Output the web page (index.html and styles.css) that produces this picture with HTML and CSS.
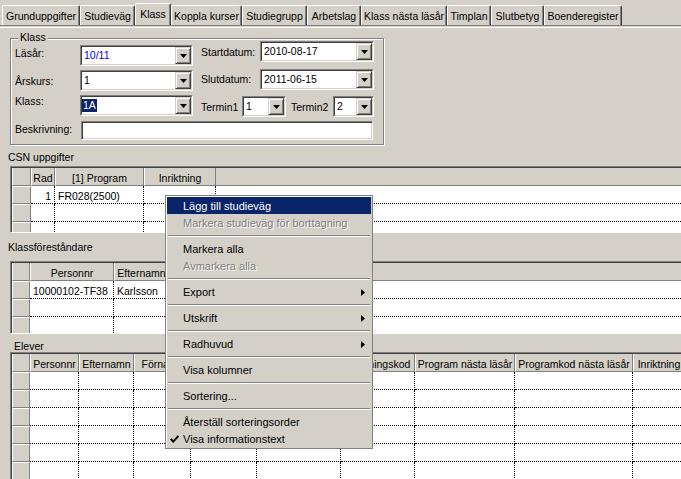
FILE: index.html
```html
<!DOCTYPE html>
<html lang="sv">
<head>
<meta charset="utf-8">
<title>Klass</title>
<link rel="stylesheet" href="styles.css">
</head>
<body>
<div class="app">
  <div class="tabs">
    <div class="tab tab-grund">Grunduppgifter</div>
    <div class="tab tab-studievag">Studieväg</div>
    <div class="tab tab-klass active">Klass</div>
    <div class="tab tab-koppla">Koppla kurser</div>
    <div class="tab tab-grupp">Studiegrupp</div>
    <div class="tab tab-arbetslag">Arbetslag</div>
    <div class="tab tab-nasta">Klass nästa läsår</div>
    <div class="tab tab-timplan">Timplan</div>
    <div class="tab tab-slutbetyg">Slutbetyg</div>
    <div class="tab tab-boende">Boenderegister</div>
  </div>

  <div class="panel">
    <div class="group">
      <div class="group-title">Klass</div>
      <div class="group-body">
        <div class="col-left">
          <div class="frow">
            <div class="lbl lbl-left pt2">Läsår:</div>
            <div class="combo w113"><div class="combo-in"><div class="combo-text blue">10/11</div><div class="combo-btn"><svg viewBox="0 0 7 4"><polygon points="0,0 7,0 3.5,4" fill="#000"/></svg></div></div></div>
          </div>
          <div class="frow">
            <div class="lbl lbl-left pt5">Årskurs:</div>
            <div class="combo w113"><div class="combo-in"><div class="combo-text">1</div><div class="combo-btn"><svg viewBox="0 0 7 4"><polygon points="0,0 7,0 3.5,4" fill="#000"/></svg></div></div></div>
          </div>
          <div class="frow">
            <div class="lbl lbl-left pt0">Klass:</div>
            <div class="combo w113"><div class="combo-in"><div class="combo-text sel-wrap"><span class="sel">1A</span></div><div class="combo-btn"><svg viewBox="0 0 7 4"><polygon points="0,0 7,0 3.5,4" fill="#000"/></svg></div></div></div>
          </div>
        </div>
        <div class="col-right">
          <div class="frow">
            <div class="lbl lbl-right pt5">Startdatum:</div>
            <div class="combo w114"><div class="combo-in"><div class="combo-text">2010-08-17</div><div class="combo-btn"><svg viewBox="0 0 7 4"><polygon points="0,0 7,0 3.5,4" fill="#000"/></svg></div></div></div>
          </div>
          <div class="frow row-slut">
            <div class="lbl lbl-right pt4">Slutdatum:</div>
            <div class="combo w114"><div class="combo-in"><div class="combo-text">2011-06-15</div><div class="combo-btn"><svg viewBox="0 0 7 4"><polygon points="0,0 7,0 3.5,4" fill="#000"/></svg></div></div></div>
          </div>
          <div class="frow row-termin">
            <div class="lbl lbl-t1 pt5">Termin1</div>
            <div class="combo w44"><div class="combo-in"><div class="combo-text">1</div><div class="combo-btn"><svg viewBox="0 0 7 4"><polygon points="0,0 7,0 3.5,4" fill="#000"/></svg></div></div></div>
            <div class="lbl lbl-t2 pt5">Termin2</div>
            <div class="combo w41"><div class="combo-in"><div class="combo-text">2</div><div class="combo-btn"><svg viewBox="0 0 7 4"><polygon points="0,0 7,0 3.5,4" fill="#000"/></svg></div></div></div>
          </div>
        </div>
      </div>
      <div class="desc">
        <div class="lbl lbl-desc">Beskrivning:</div>
        <div class="textbox"></div>
      </div>
    </div>

    <div class="section-label csn-label">CSN uppgifter</div>
    <div class="grid grid-csn">
      <div class="g-row">
        <div class="h"></div><div class="h">Rad</div><div class="h">[1] Program</div><div class="h">Inriktning</div><div class="h fill"></div>
      </div>
      <div class="g-row">
        <div class="c rh"></div><div class="c num">1</div><div class="c">FR028(2500)</div><div class="c"></div><div class="c fill"></div>
      </div>
      <div class="g-row">
        <div class="c rh"></div><div class="c"></div><div class="c"></div><div class="c"></div><div class="c fill"></div>
      </div>
      <div class="g-row">
        <div class="c rh"></div><div class="c"></div><div class="c"></div><div class="c"></div><div class="c fill"></div>
      </div>
    </div>

    <div class="section-label kf-label">Klassföreståndare</div>
    <div class="grid grid-kf">
      <div class="g-row">
        <div class="h"></div><div class="h">Personnr</div><div class="h">Efternamn</div><div class="h"></div><div class="h fill"></div>
      </div>
      <div class="g-row">
        <div class="c rh"></div><div class="c">10000102-TF38</div><div class="c">Karlsson</div><div class="c"></div><div class="c fill"></div>
      </div>
      <div class="g-row">
        <div class="c rh"></div><div class="c"></div><div class="c"></div><div class="c"></div><div class="c fill"></div>
      </div>
      <div class="g-row">
        <div class="c rh"></div><div class="c"></div><div class="c"></div><div class="c"></div><div class="c fill"></div>
      </div>
    </div>

    <div class="section-label elever-label">Elever</div>
    <div class="grid grid-elever">
      <div class="g-row">
        <div class="h"></div><div class="h">Personnr</div><div class="h">Efternamn</div><div class="h">Förnamn</div><div class="h"></div><div class="h"></div><div class="h">Inriktningskod</div><div class="h">Program nästa läsår</div><div class="h">Programkod nästa läsår</div><div class="h">Inriktning</div><div class="h fill"></div>
      </div>
      <div class="g-row"><div class="c rh"></div><div class="c"></div><div class="c"></div><div class="c"></div><div class="c"></div><div class="c"></div><div class="c"></div><div class="c"></div><div class="c"></div><div class="c"></div><div class="c fill"></div></div>
      <div class="g-row"><div class="c rh"></div><div class="c"></div><div class="c"></div><div class="c"></div><div class="c"></div><div class="c"></div><div class="c"></div><div class="c"></div><div class="c"></div><div class="c"></div><div class="c fill"></div></div>
      <div class="g-row"><div class="c rh"></div><div class="c"></div><div class="c"></div><div class="c"></div><div class="c"></div><div class="c"></div><div class="c"></div><div class="c"></div><div class="c"></div><div class="c"></div><div class="c fill"></div></div>
      <div class="g-row"><div class="c rh"></div><div class="c"></div><div class="c"></div><div class="c"></div><div class="c"></div><div class="c"></div><div class="c"></div><div class="c"></div><div class="c"></div><div class="c"></div><div class="c fill"></div></div>
      <div class="g-row"><div class="c rh"></div><div class="c"></div><div class="c"></div><div class="c"></div><div class="c"></div><div class="c"></div><div class="c"></div><div class="c"></div><div class="c"></div><div class="c"></div><div class="c fill"></div></div>
      <div class="g-row"><div class="c rh"></div><div class="c"></div><div class="c"></div><div class="c"></div><div class="c"></div><div class="c"></div><div class="c"></div><div class="c"></div><div class="c"></div><div class="c"></div><div class="c fill"></div></div>
      <div class="g-row"><div class="c rh"></div><div class="c"></div><div class="c"></div><div class="c"></div><div class="c"></div><div class="c"></div><div class="c"></div><div class="c"></div><div class="c"></div><div class="c"></div><div class="c fill"></div></div>
    </div>
  </div>

  <div class="menu">
    <div class="mi active">Lägg till studieväg</div>
    <div class="mi disabled">Markera studieväg för borttagning</div>
    <div class="sep"></div>
    <div class="mi">Markera alla</div>
    <div class="mi disabled">Avmarkera alla</div>
    <div class="sep"></div>
    <div class="mi">Export<svg class="arrow" viewBox="0 0 4 7"><polygon points="0,0 4,3.5 0,7" fill="#000"/></svg></div>
    <div class="sep"></div>
    <div class="mi">Utskrift<svg class="arrow" viewBox="0 0 4 7"><polygon points="0,0 4,3.5 0,7" fill="#000"/></svg></div>
    <div class="sep"></div>
    <div class="mi">Radhuvud<svg class="arrow" viewBox="0 0 4 7"><polygon points="0,0 4,3.5 0,7" fill="#000"/></svg></div>
    <div class="sep"></div>
    <div class="mi">Visa kolumner</div>
    <div class="sep"></div>
    <div class="mi">Sortering...</div>
    <div class="sep"></div>
    <div class="mi">Återställ sorteringsorder</div>
    <div class="mi checked"><svg class="check" viewBox="0 0 9 8"><polyline points="0.8,3.8 3.2,6.6 8.4,0.8" fill="none" stroke="#000" stroke-width="2"/></svg>Visa informationstext</div>
  </div>
</div>
</body>
</html>
```

FILE: styles.css
```css
* { box-sizing: border-box; }
html, body { margin: 0; padding: 0; }
body {
  background: #d4d0c8;
  font-family: "Liberation Sans", Arial, sans-serif;
  font-size: 10.5px;
  color: #000;
  width: 681px;
  height: 479px;
  overflow: hidden;
}
.app { position: relative; width: 681px; height: 479px; overflow: hidden; }

/* Tabs */
.tabs {
  display: flex;
  align-items: flex-end;
  height: 26px;
  padding-left: 2px;
  border-bottom: 1px solid #808080;
}
.tab {
  height: 20px;
  border: 1px solid;
  border-bottom: 0;
  border-color: #fff #404040 #fff #fff;
  border-radius: 2px 2px 0 0;
  box-shadow: inset -1px 0 0 #808080;
  padding-top: 1px;
  line-height: 18px;
  text-align: center;
  white-space: nowrap;
  overflow: hidden;
}
.tab.active { height: 22px; }
.tab-grund { width: 78px; }
.tab-studievag { width: 55px; }
.tab-klass { width: 36px; }
.tab-koppla { width: 71px; }
.tab-grupp { width: 65px; }
.tab-arbetslag { width: 54px; }
.tab-nasta { width: 86px; }
.tab-timplan { width: 44px; }
.tab-slutbetyg { width: 53px; }
.tab-boende { width: 78px; }

.panel { margin-top: 1px; border-top: 1px solid #fff; }

/* Group box */
.group {
  margin: 10px 0 0 10px;
  width: 374px;
  height: 107px;
  border: 1px solid #808080;
  box-shadow: inset 1px 1px 0 #fff, 1px 1px 0 #fff;
}
.group-title {
  width: max-content;
  margin: -8px 0 0 7px;
  padding: 0 2px;
  height: 13px;
  line-height: 13px;
  background: #d4d0c8;
}
.group-body { display: flex; align-items: flex-start; padding-left: 4px; }
.col-left { width: 178px; margin-top: 1px; display: flex; flex-direction: column; gap: 4px; }
.col-right { margin-left: 8px; margin-top: -3px; display: flex; flex-direction: column; }
.frow { display: flex; height: 21px; }
.row-slut { margin-top: 7px; }
.row-termin { margin-top: 6px; }
.lbl { line-height: 12px; white-space: nowrap; flex: none; }
.lbl-left { width: 65px; }
.lbl-right { width: 59px; }
.lbl-t1 { width: 41px; }
.lbl-t2 { width: 42px; margin-left: 5px; }
.pt0 { padding-top: 0; }
.pt2 { padding-top: 2px; }
.pt4 { padding-top: 4px; }
.pt5 { padding-top: 5px; }

.combo {
  display: flex;
  flex: none;
  height: 21px;
  border: 1px solid;
  border-color: #808080 #fff #fff #808080;
  background: #fff;
}
.w113 { width: 113px; }
.w114 { width: 114px; }
.w44 { width: 44px; }
.w41 { width: 41px; }
.combo-in {
  flex: 1;
  display: flex;
  min-width: 0;
  border: 1px solid;
  border-color: #404040 #d4d0c8 #d4d0c8 #404040;
}
.combo-text {
  flex: 1;
  min-width: 0;
  padding-left: 2px;
  line-height: 17px;
  white-space: nowrap;
  overflow: hidden;
}
.sel-wrap { padding-left: 0; }
.sel {
  display: inline-block;
  background: #0a246a;
  color: #fff;
  line-height: 13px;
  padding: 0 1px;
}
.blue { color: #0000ff; }
.combo-btn {
  width: 16px;
  height: 17px;
  flex: none;
  background: #d4d0c8;
  border: 1px solid;
  border-color: #d4d0c8 #404040 #404040 #d4d0c8;
  box-shadow: inset 1px 1px 0 #fff, inset -1px -1px 0 #808080;
  display: flex;
  align-items: center;
  justify-content: center;
}
.combo-btn svg { display: block; width: 7px; height: 4px; }

.desc { display: flex; margin: 4px 0 0 4px; }
.lbl-desc { width: 66px; padding-top: 2px; }
.textbox {
  width: 292px;
  height: 19px;
  border: 1px solid;
  border-color: #808080 #fff #fff #808080;
  background: #fff;
  box-shadow: inset 1px 1px 0 #404040, inset -1px -1px 0 #d4d0c8;
}

/* Section labels */
.section-label { padding-left: 8px; line-height: 12px; white-space: nowrap; }
.csn-label { height: 21px; padding-top: 6px; }
.kf-label { height: 28px; padding-top: 8px; }
.elever-label { height: 18px; padding-top: 6px; padding-left: 14px; }

/* Grids */
.grid {
  margin-left: 10px;
  width: 700px;
  border: 1px solid;
  border-color: #808080 #fff #fff #808080;
  padding: 1px 0 0 1px;
  box-shadow: inset 1px 1px 0 #404040;
  background: #fff;
  overflow: hidden;
}
.grid-csn { height: 67px; }
.grid-kf { height: 73px; }
.grid-elever { height: 140px; }
.g-row { display: grid; }
.grid-csn .g-row { grid-template-columns: 19px 24px 89px 72px 1fr; }
.grid-kf .g-row { grid-template-columns: 18px 84px 55px 62px 1fr; }
.grid-elever .g-row { grid-template-columns: 18px 49px 55px 57px 66px 84px 74px 100px 118px 52px 1fr; }

.h, .c {
  height: 18px;
  padding-top: 2px;
  line-height: 16px;
  white-space: nowrap;
  overflow: hidden;
}
.h {
  background: #d4d0c8;
  border-left: 1px solid #fff;
  border-right: 1px solid #808080;
  border-bottom: 1px solid #808080;
  text-align: center;
}
.h.fill { border-left: 0; border-right: 0; }
.c {
  background: #fff;
  border-right: 1px dotted #000;
  border-bottom: 1px dotted #000;
  padding-left: 3px;
  padding-right: 3px;
}
.c.rh {
  background: #d4d0c8;
  border: 1px solid;
  border-color: #fff #808080 #808080 #fff;
}
.c.fill { border-right: 0; }
.c.num { text-align: right; }

/* Context menu */
.menu {
  position: absolute;
  left: 165px;
  top: 195px;
  width: 208px;
  border: 1px solid #808080;
  padding: 1px;
  background: #d4d0c8;
  box-shadow: inset 1px 1px 0 #fff;
  font-size: 11px;
}
.mi {
  height: 17px;
  display: flex;
  align-items: flex-start;
  padding: 2px 6px 0 16px;
  line-height: 15px;
  white-space: nowrap;
}
.mi.active { background: #0a246a; color: #fff; }
.mi.disabled { color: #808080; text-shadow: 1px 1px 0 #fff; }
.mi .arrow { margin-left: auto; margin-top: 4px; width: 4px; height: 7px; flex: none; }
.mi.checked { padding-left: 3px; }
.mi .check { width: 9px; height: 8px; margin: 3px 4px 0 0; flex: none; }
.sep { height: 9px; padding: 4px 1px 0; }
.sep::before {
  content: "";
  display: block;
  border-top: 1px solid #808080;
  border-bottom: 1px solid #fff;
}
```
